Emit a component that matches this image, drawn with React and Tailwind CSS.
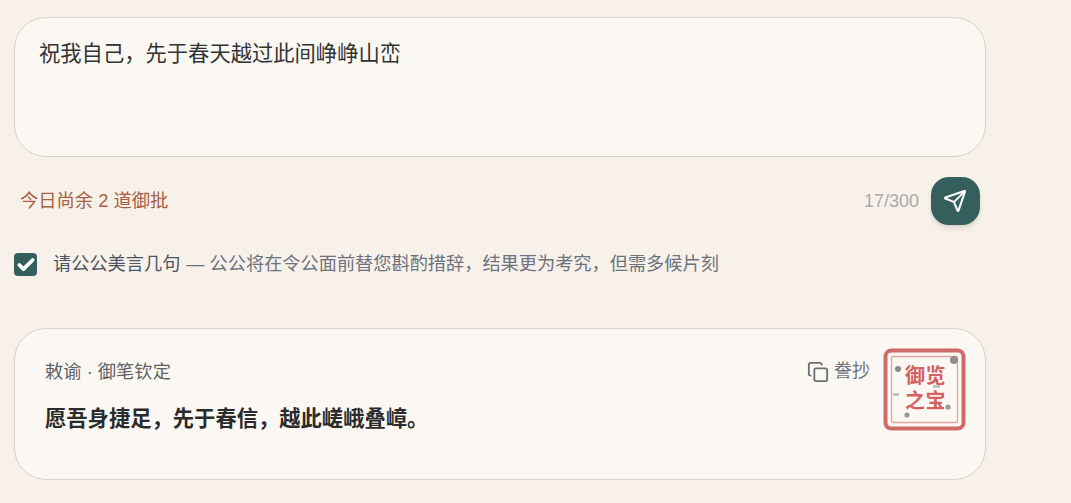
import { Check, Copy, Send } from 'lucide-react';

const font = { fontFamily: '"Liberation Sans","Noto Sans CJK SC",sans-serif' };

function Seal() {
  return (
    <svg width="84" height="84" viewBox="0 0 84 84" className="shrink-0">
      <rect x="2.5" y="2.5" width="78" height="78" rx="6" fill="#fbf8f4" stroke="#d06a68" strokeWidth="4" />
      <rect x="8.5" y="8.5" width="66" height="66" rx="2" fill="none" stroke="#e3a3a0" strokeWidth="1.3" />
      <g fill="#d4605f" fontFamily='"Noto Sans CJK SC",sans-serif' fontWeight="700" fontSize="20" textAnchor="middle">
        <text x="32" y="35">御</text>
        <text x="52.5" y="35">览</text>
        <text x="32" y="60">之</text>
        <text x="52.5" y="60">宝</text>
      </g>
      <circle cx="15" cy="21" r="3" fill="#8a8a8a" />
      <circle cx="71" cy="12" r="4" fill="#8f8f8f" />
      <circle cx="65" cy="59" r="2.6" fill="#999" />
      <circle cx="24" cy="67" r="2.6" fill="#999" />
      <rect x="10" y="45" width="6" height="3" fill="#c4c4c4" />
      <rect x="50" y="37" width="7" height="3" fill="#c4c4c4" />
    </svg>
  );
}

export default function App() {
  return (
    <div style={font} className="min-h-[503px] bg-[#f8f1ea] pl-[14px] pt-[17px] w-full overflow-hidden">
      <div className="w-[972px]">
        <div className="h-[140px] rounded-[32px] border border-[#dcd2c4] bg-[#fbf8f3] px-6 py-5 text-[21.3px] leading-[32px] text-[#333333]">
          祝我自己，先于春天越过此间峥峥山峦
        </div>

        <div className="mt-5 flex items-center justify-between pl-[6px] pr-[6px]">
          <span className="text-[18.3px] text-[#a65f42]">今日尚余 2 道御批</span>
          <div className="flex items-center gap-3">
            <span className="text-[18px] text-[#aaaaaa]">17/300</span>
            <button className="flex h-[48px] w-[49px] items-center justify-center rounded-[18px] bg-[#355f5c] pr-[2px] shadow-md">
              <Send size={24} strokeWidth={2} color="#ffffff" />
            </button>
          </div>
        </div>

        <div className="mt-[26px] flex items-center">
          <span className="mb-[4px] flex h-[23px] w-[23px] items-center justify-center rounded-[4px] bg-[#355f5c]">
            <Check size={20} strokeWidth={4.5} color="#ffffff" />
          </span>
          <span className="ml-[16px] pb-[4px] text-[18.2px] text-[#4b5563]">请公公美言几句</span>
          <span className="ml-[6px] pb-[4px] text-[18.2px] text-[#6b7280]">— 公公将在令公面前替您斟酌措辞，结果更为考究，但需多候片刻</span>
        </div>

        <div className="mt-[46px] flex h-[152px] items-start rounded-[32px] border border-[#dcd2c4] bg-[#fbf8f3] pl-[30px] pr-[18px] pt-[19px]">
          <div className="flex-1">
            <div className="mt-[1px] text-[18.3px] leading-[46px] text-[#5f6368]">敕谕 · 御笔钦定</div>
            <div className="mt-[9px] text-[21.3px] font-bold leading-[30px] text-[#2b2b2b]">愿吾身捷足，先于春信，越此嵯峨叠嶂。</div>
          </div>
          <div className="mr-[13px] mt-[10px] flex items-center gap-[5px] text-[18px] text-[#6b7280]">
            <Copy size={22} strokeWidth={2} color="#6b7075" />
            <span>誊抄</span>
          </div>
          <Seal />
        </div>
      </div>
    </div>
  );
}
